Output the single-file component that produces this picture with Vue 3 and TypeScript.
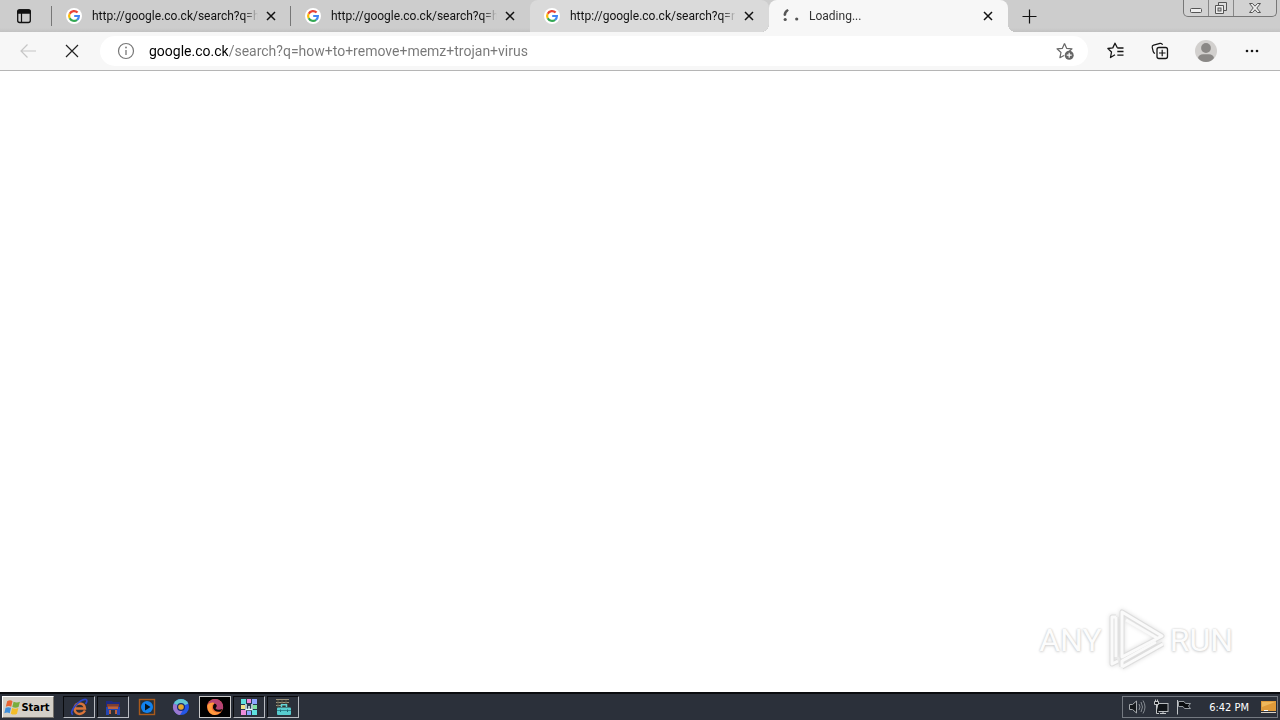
<script setup lang="ts">
import { ref } from 'vue'

interface Tab {
  title: string
  state: 'idle' | 'hover' | 'active'
}

const tabs: Tab[] = [
  { title: 'http://google.co.ck/search?q=h', state: 'idle' },
  { title: 'http://google.co.ck/search?q=h', state: 'idle' },
  { title: 'http://google.co.ck/search?q=r', state: 'hover' },
  { title: 'Loading...', state: 'active' },
]

const url = ref('google.co.ck/search?q=how+to+remove+memz+trojan+virus')
</script>

<template>
  <div class="desktop">
    <header class="strip">
      <button class="tab-actions" aria-label="Tab actions menu">
        <svg width="16" height="16" viewBox="0 0 16 16"><rect x="1.700" y="2" width="12.600" height="12.500" rx="2" fill="none" stroke="#111" stroke-width="1.300" /><path d="M1 5.800V3.500Q1 1.300 3.300 1.300H12.700Q15 1.300 15 3.500V5.800Z" fill="#111" /><path d="M5.500 5V14" stroke="#111" stroke-width="1.200" /></svg>
      </button>
      <nav class="tabs">
        <div v-for="(tab, i) in tabs" :key="i" class="tab" :class="tab.state">
          <button class="tab-main">
            <svg v-if="tab.state !== 'active'" class="favicon" width="16" height="16" viewBox="0 0 16 16">
              <circle cx="8" cy="8" r="8" fill="#fff" />
              <g fill="none" stroke-width="2.200">
                <path d="M11.600 4.600A4.900 4.900 0 0 0 3.700 5.700" stroke="#ea4335" />
                <path d="M3.700 5.700A4.900 4.900 0 0 0 3.700 10.300" stroke="#fbbc05" />
                <path d="M3.700 10.300A4.900 4.900 0 0 0 11.100 11.800" stroke="#34a853" />
                <path d="M11.100 11.800A4.900 4.900 0 0 0 12.900 8H8.200" stroke="#4285f4" />
              </g>
            </svg>
            <svg v-else class="favicon" width="16" height="16" viewBox="0 0 16 16"><g fill="#555"><path d="M.5 6.500Q1 2.500 4.500 1L5.800 2.600Q3.300 4.500 3 7.500L1 8Z" /><circle cx="2.200" cy="11.500" r="1.600" /><circle cx="13.700" cy="11" r="1.600" /></g></svg>
            <span class="tab-title">{{ tab.title }}</span>
          </button>
          <button class="close" aria-label="Close tab">
            <svg width="10" height="10" viewBox="0 0 10 10"><path d="M1 1L9 9M9 1L1 9" stroke="#111" stroke-width="1.500" /></svg>
          </button>
        </div>
      </nav>
      <button class="new-tab" aria-label="New tab">
        <svg width="15" height="15" viewBox="0 0 15 15"><path d="M7.500 0.500V14.500M0.500 7.500H14.500" stroke="#111" stroke-width="1.200" /></svg>
      </button>
      <div class="window-controls">
        <button class="minimize" aria-label="Minimize"><svg width="14" height="16" viewBox="0 0 14 16"><rect x="1.500" y="8.500" width="11" height="4" rx="1" fill="#eee" stroke="#555" /></svg></button>
        <button class="restore" aria-label="Restore"><svg width="14" height="16" viewBox="0 0 14 16"><path d="M4.500 2.500H12.500V10.500H4.500Z" fill="#ddd" stroke="#555" /><path d="M1.500 5.500H9.500V13.500H1.500Z" fill="#eee" stroke="#555" /><rect x="4" y="8" width="3" height="3" fill="#ccc" stroke="#555" /></svg></button>
        <button class="quit" aria-label="Close"><svg width="12" height="16" viewBox="0 0 12 16"><path d="M0.500 3.500H3.500L6 6.200L8.500 3.500H11.500L7.800 8L11.500 12.500H8.500L6 9.800L3.500 12.500H0.500L4.200 8Z" fill="#eee" stroke="#555" /></svg></button>
      </div>
    </header>

    <div class="toolbar">
      <button class="tool" aria-label="Back" disabled>
        <svg width="18" height="16" viewBox="0 0 18 16"><path d="M17 8H2M8.500 1.500L2 8L8.500 14.500" fill="none" stroke="#c6c6c6" stroke-width="1.200" /></svg>
      </button>
      <button class="tool" aria-label="Stop">
        <svg width="14" height="14" viewBox="0 0 14 14"><path d="M1 1L13 13M13 1L1 13" stroke="#222" stroke-width="1.200" /></svg>
      </button>
      <form class="address" @submit.prevent>
        <button type="button" class="info" aria-label="Site information">
          <svg width="18" height="18" viewBox="0 0 18 18"><circle cx="9" cy="9" r="7.500" fill="none" stroke="#777" stroke-width="1.200" /><path d="M9 8V13" stroke="#777" stroke-width="1.300" /><circle cx="9" cy="5.500" r="0.900" fill="#777" /></svg>
        </button>
        <input v-model="url" class="url" type="text" aria-label="Address" spellcheck="false" />
        <button type="button" class="add-fav" aria-label="Add to favorites">
          <svg width="18" height="18" viewBox="0 0 18 18"><path d="M8.500 1.500L10.600 6.300L16 6.800L13 9.500M8.500 1.500L6.400 6.300L1 6.800L5 10.500L3.900 15.700L8 13.400" fill="none" stroke="#666" stroke-width="1.200" stroke-linejoin="round" /><circle cx="13.200" cy="13.200" r="4.500" fill="#666" /><path d="M13.200 10.700V15.700M10.700 13.200H15.700" stroke="#fff" stroke-width="1.200" /></svg>
        </button>
      </form>
      <div class="tools">
        <button class="tool" aria-label="Favorites">
          <svg width="18" height="18" viewBox="0 0 18 18"><path d="M10.300 5.800L8 1.200L5.800 5.900L0.900 6.500L4.500 10L3.500 15.500L8 12.800M10.300 6H16.500M10.300 9.500H16.500M10.300 13.200H16.500" fill="none" stroke="#161616" stroke-width="1.300" stroke-linejoin="round" /></svg>
        </button>
        <button class="tool" aria-label="Collections">
          <svg width="18" height="18" viewBox="0 0 18 18"><path d="M4 11.500Q2.600 11 2.200 9.500L1.200 5.500Q0.900 3.700 2.600 3.200L9 1.400Q10.800 1 11.600 2.800" fill="none" stroke="#161616" stroke-width="1.200" /><rect x="6" y="5.500" width="10.500" height="11" rx="2" fill="none" stroke="#161616" stroke-width="1.300" /><path d="M11.200 7.800V14.200M8 11H14.500" stroke="#161616" stroke-width="1.200" /></svg>
        </button>
        <button class="tool profile" aria-label="Profile">
          <svg width="22" height="22" viewBox="0 0 22 22"><circle cx="11" cy="11" r="11" fill="#d2d0ce" /><circle cx="11" cy="8" r="4.900" fill="#8a8886" /><path d="M3 18Q4 14.300 8 14.300H14Q18 14.300 19 18Q16 22 11 22Q6 22 3 18Z" fill="#8a8886" /></svg>
        </button>
        <button class="tool" aria-label="Settings and more">
          <svg width="14" height="4" viewBox="0 0 14 4"><g fill="#161616"><circle cx="2" cy="2" r="1.300" /><circle cx="7" cy="2" r="1.300" /><circle cx="12" cy="2" r="1.300" /></g></svg>
        </button>
      </div>
    </div>

    <main class="page">
      <div class="watermark">
        <span>ANY</span>
        <svg width="60" height="64" viewBox="0 0 60 64" fill="none" stroke-linejoin="round">
          <g stroke="#dedede" stroke-width="5"><path d="M16 4V49L56 28Z" /><path d="M10 9H6V56L12 53M10 9V49M16 59L57 36M16 59V53L50 34" /></g>
          <g stroke="#fafafa" stroke-width="3"><path d="M16 4V49L56 28Z" /><path d="M10 9H6V56L12 53M10 9V49M16 59L57 36M16 59V53L50 34M20 12L51 30" /></g>
        </svg>
        <span>RUN</span>
      </div>
    </main>

    <footer class="taskbar">
      <button class="start">
        <svg width="17" height="17" viewBox="0 0 16 16"><path d="M3 2Q6 .5 8 2L6.800 7.300Q4.500 6 1.700 7.300Z" fill="#e96432" /><path d="M9 2.500Q12 4 15 2.500L13.700 7.500Q11 9 7.800 7.500Z" fill="#79ad3d" /><path d="M1.500 8.300Q4 7 6.600 8.300L5.400 13.500Q3 12 .3 13.500Z" fill="#3e8edb" /><path d="M7.600 8.500Q10.500 10 13.500 8.500L12.200 13.800Q9.500 15.500 6.400 13.800Z" fill="#f3bd28" /></svg>
        <span>Start</span>
      </button>
      <div class="apps">
        <button class="app raised" aria-label="Internet Explorer">
          <svg width="18" height="18" viewBox="0 0 18 18" fill="none"><path d="M15 12.500Q13 16 9.500 16Q4.500 15.500 4.500 10.500Q5 5.500 9.500 5.500Q14.500 5.500 15 10.500H5" stroke="#d9743a" stroke-width="2.400" /><path d="M3 16.500Q-.5 15 5 8Q12 .5 16 1.500Q18 2.500 15.500 6" stroke="#2c45c9" stroke-width="1.700" /></svg>
        </button>
        <button class="app raised" aria-label="File Explorer">
          <svg width="18" height="18" viewBox="0 0 18 18"><path d="M2 3H8L9 4H16V9H2Z" fill="#1d2a80" /><path d="M3 6H15V9H3Z" fill="#7c3e30" /><path d="M2 9H16V17H13V12H5V17H2Z" fill="#2546b4" /><path d="M4 8.500H14V11H4ZM5 12H7V16H5ZM11 12H13V16H11Z" fill="#bb6240" /></svg>
        </button>
        <button class="app" aria-label="Media Player">
          <svg width="18" height="18" viewBox="0 0 18 18"><rect x="1.500" y="1.500" width="15" height="15" fill="#26303a" stroke="#a95a1c" stroke-width="1.400" /><circle cx="9" cy="9" r="6" fill="#1182ef" /><path d="M7 5.500L12.500 9L7 12.500Z" fill="#07151f" /></svg>
        </button>
        <button class="app" aria-label="Chrome">
          <svg width="18" height="18" viewBox="0 0 18 18"><circle cx="9" cy="9" r="8" fill="#2457e8" /><path d="M9 9L1.800 5.500A8 8 0 0 1 16.300 5.500Z" fill="#62c8d2" /><path d="M9 9L1.800 5.500A8 8 0 0 0 8 17L11 12Z" fill="#9c78cf" /><circle cx="9" cy="9" r="4" fill="#152a72" /><circle cx="9" cy="9" r="2.800" fill="#e5a82b" /></svg>
        </button>
        <button class="app current" aria-label="Edge">
          <svg width="18" height="18" viewBox="0 0 18 18"><circle cx="9" cy="9" r="8" fill="#ed6933" /><path d="M3 4Q7-.5 13 2Q18 5 17 11Q12 14 9 10Q12 7 8 5Q5 4 1.500 8Z" fill="#b64475" /><path d="M1.500 7Q5 3.500 8.500 5Q5 7 6 11Q8 16 15 13.800Q9 19.500 4 15Q1 12 1.500 7Z" fill="#ff9b3d" /><path d="M8.500 5.500Q12.500 7 9.500 10.200Q11.500 13 16.500 11L15 13.500Q8.500 14.500 7 10Q6.500 7 8.500 5.500Z" fill="#080808" /></svg>
        </button>
        <button class="app raised" aria-label="Security tool">
          <svg width="18" height="18" viewBox="0 0 18 18"><path d="M1 1H17V17H1Z" fill="#273a52" /><path d="M1 1H6V6H1ZM12 12H17V17H12Z" fill="#5fe1df" /><path d="M7 1H11V5H7ZM1 12H6V17H1Z" fill="#ec8cdc" /><path d="M12 1H17V6H12ZM7 13H11V17H7Z" fill="#8ca5ff" /><path d="M1 7H5V11H1Z" fill="#efe38b" /><path d="M13 7H17V11H13Z" fill="#7ee1a1" /><path d="M6 6V11.500H12V6M9 8V11.500" fill="none" stroke="#eaffff" stroke-width="1.400" /></svg>
        </button>
        <button class="app raised" aria-label="Toolbox">
          <svg width="18" height="18" viewBox="0 0 18 18"><path d="M2 1H15V10H2Z" fill="#303332" /><path d="M2 1.500H15M2 4.500H15M2 7.500H8" stroke="#9b927b" /><path d="M4 2V9M8 2V7M12 2V6" stroke="#5f5a4c" /><rect x="3" y="9.500" width="14" height="7.500" rx="1" fill="#58cdd0" /><path d="M7.500 9V6.800H12.500V9" fill="none" stroke="#63d4d5" stroke-width="1.500" /><path d="M3 12.500H17" stroke="#2f8791" /><path d="M6.500 11.500V14M13.500 11.500V14" stroke="#216a76" /></svg>
        </button>
      </div>
      <div class="tray">
        <button aria-label="Volume"><svg width="18" height="16" viewBox="0 0 18 16"><path d="M1.500 5.500H4.500L8.500 2V14L4.500 10.500H1.500Z" fill="#15181c" stroke="#a5a9ad" /><path d="M11 5Q13 8 11 11M13 3Q16 8 13 13M15 1.500Q19 8 15 14.500" fill="none" stroke="#868b91" /></svg></button>
        <button aria-label="Network"><svg width="16" height="16" viewBox="0 0 16 16"><rect x="4.500" y="4.500" width="10.500" height="8" fill="#101317" stroke="#b7babd" /><path d="M7 14.500H13M10 12.500V15" stroke="#c5c7c9" /><path d="M1.500 2.500H5.500V5.500H1.500ZM2.500 0.500V2.500M4.500 0.500V2.500M3.500 5.500V14.500H6" fill="#15181c" stroke="#c5c7c9" /></svg></button>
        <button aria-label="Action Center"><svg width="16" height="16" viewBox="0 0 16 16"><path d="M1.500 1V15.500" stroke="#c3c6c9" /><path d="M2.500 2.500H8L9.500 4.500H14.500L12.500 7L14.500 9.500H8.500L7 7.500H2.500Z" fill="#0c0e11" stroke="#979ca2" /></svg></button>
        <time>6:42 PM</time>
        <button aria-label="Show desktop"><svg width="16" height="16" viewBox="0 0 16 16"><rect x="1" y="2" width="15" height="10" fill="#df9a39" /><path d="M2 3H15L2 8Z" fill="#efb85c" /><path d="M1 13.500H16" stroke="#d9d1c4" /><path d="M4 11.500H8" stroke="#fff" /></svg></button>
      </div>
    </footer>
  </div>
</template>

<style>
body { margin: 0; }
</style>

<style scoped>
.desktop {
  display: flex;
  flex-direction: column;
  min-height: 100vh;
  background: #fff;
  font-family: Roboto, "Noto Sans", sans-serif;
}
* { box-sizing: border-box; }
button {
  display: flex;
  align-items: center;
  justify-content: center;
  margin: 0;
  padding: 0;
  border: 0;
  background: none;
  font: inherit;
  color: inherit;
}
svg { display: block; flex: none; }
.strip {
  display: flex;
  height: 32px;
  background: linear-gradient(#cdcdcd 28px, #c2c2c2);
}
.tab-actions {
  flex: none;
  width: 52px;
  padding-right: 4px;
  background: linear-gradient(#777, #777) right center / 1px 20px no-repeat;
}
.tabs { display: flex; flex: 0 1 956px; min-width: 0; }
.tab {
  position: relative;
  display: flex;
  flex: 1 1 0;
  min-width: 0;
  align-items: center;
  padding: 0 15px 0 14px;
}
.tab:first-child { background: linear-gradient(#777, #777) right center / 1px 20px no-repeat; }
.tab.hover { background: #dadada; border-radius: 8px 8px 8px 0; }
.tab.active { background: #f7f7f7; border-radius: 8px 8px 0 0; }
.tab.active::before,
.tab.active::after {
  content: "";
  position: absolute;
  bottom: 0;
  width: 8px;
  height: 8px;
}
.tab.active::before { left: -8px; background: radial-gradient(circle at 0 0, transparent 8px, #f7f7f7 8px); }
.tab.active::after { right: -8px; background: radial-gradient(circle at 100% 0, transparent 8px, #f7f7f7 8px); }
.tab-main {
  flex: 1;
  min-width: 0;
  gap: 10px;
  justify-content: flex-start;
}
.tab-title {
  flex: 1;
  min-width: 0;
  overflow: hidden;
  white-space: nowrap;
  text-align: left;
  font-size: 12px;
  line-height: 16px;
  color: #111;
  -webkit-mask-image: linear-gradient(to right, #000 calc(100% - 14px), transparent);
  mask-image: linear-gradient(to right, #000 calc(100% - 14px), transparent);
}
.active .tab-title { color: #333; }
.close { flex: none; width: 10px; margin-left: 8px; }
.new-tab { width: 28px; margin-left: 7px; }
.window-controls {
  display: flex;
  height: 17px;
  margin: 0 3px 0 auto;
  border: 1px solid #777;
  border-top: 0;
  border-radius: 0 0 5px 5px;
  background: #d2d2d2;
}
.minimize { width: 25px; border-right: 1px solid #888; }
.restore { width: 25px; border-right: 1px solid #888; }
.quit { width: 42px; }

.toolbar {
  display: flex;
  align-items: center;
  height: 39px;
  padding-left: 6px;
  border-bottom: 1px solid #b5b5b5;
  background: #f7f7f7;
}
.tool { width: 44px; height: 32px; flex: none; }
.address {
  display: flex;
  flex: 1;
  min-width: 0;
  align-items: center;
  height: 30px;
  margin-left: 6px;
  padding: 0 14px 0 17px;
  border-radius: 15px;
  background: #fff;
}
.url {
  flex: 1;
  min-width: 0;
  height: 24px;
  margin: 0 12px 0 14px;
  padding: 0;
  border: 0;
  outline: 0;
  font: 14px/24px Roboto, "Noto Sans", sans-serif;
  color: transparent;
  caret-color: #111;
  background: linear-gradient(to right, #000 79px, #777 79px);
  -webkit-background-clip: text;
  background-clip: text;
}
.tools { display: flex; align-items: center; margin-left: 6px; padding-right: 6px; }
.profile { margin: 0 2px; }

.page {
  display: flex;
  flex: 1;
  align-items: flex-end;
  justify-content: flex-end;
  padding: 0 47px 20px;
}
.watermark {
  display: flex;
  align-items: center;
  gap: 4px;
  color: #fcfcfc;
  font-size: 32px;
  line-height: 64px;
  text-shadow: 0 0 2px #c9c9c9, 0 1px 3px #d5d5d5;
}
.watermark svg { filter: drop-shadow(0 0 2px #ddd); }

.taskbar {
  display: flex;
  align-items: center;
  height: 28px;
  padding: 0 2px;
  border-top: 2px solid #0b0c0f;
  background: #2b303a;
  font-family: "DejaVu Sans Condensed", "DejaVu Sans", sans-serif;
  font-size: 11px;
}
.start {
  width: 52px;
  height: 22px;
  padding-right: 2px;
  border: 1px solid;
  border-color: #fff #77736d #77736d #fff;
  background: #d4d0c8;
  color: #000;
  font-weight: 700;
}
.apps { display: flex; gap: 2px; margin-left: 9px; }
.app { width: 32px; height: 22px; border: 1px solid transparent; }
.raised { border-color: #090a0d #b9bcc2 #b9bcc2 #090a0d; }
.current { border-color: #c9c9c9; background: #000; }
.tray {
  display: flex;
  align-items: center;
  gap: 7px;
  height: 22px;
  margin-left: auto;
  padding: 0 1px 0 5px;
  border: 1px solid #747981;
  color: #fff;
}
.tray time { margin: 0 4px 0 10px; }
</style>
